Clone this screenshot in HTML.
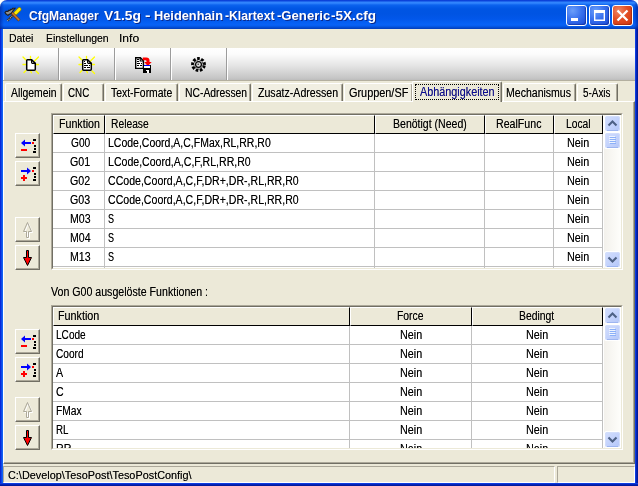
<!DOCTYPE html>
<html><head><meta charset="utf-8"><title>CfgManager</title>
<style>
*{box-sizing:border-box;margin:0;padding:0}
html,body{width:638px;height:486px;overflow:hidden;background:#fff}
body{font-family:"Liberation Sans",sans-serif;font-size:12px;color:#000;position:relative}
#win{position:absolute;left:0;top:0;width:638px;height:486px;background:#ece9d8;border-radius:7px 7px 0 0;overflow:hidden;will-change:transform}
#title{position:absolute;left:0;top:0;width:638px;height:29px;
 background:linear-gradient(to right,rgba(0,10,120,.45) 0,rgba(0,10,120,.2) 2px,rgba(0,10,120,0) 4px,rgba(0,10,120,0) 634px,rgba(0,10,120,.25) 636px,rgba(0,10,120,.5) 638px),linear-gradient(to bottom,#0a3cd4 0,#0d48de 1px,#2e80fa 2px,#3388ff 3px,#1f74f6 4px,#0c63ee 5px,#045be8 7px,#0055e3 9px,#0054e3 14px,#0257ea 19px,#0560f4 23px,#0862f6 25px,#055cec 26px,#0452dc 27px,#0346c8 28px,#033eb8 29px)}
#bl{position:absolute;left:0;top:29px;width:3px;height:457px;background:linear-gradient(to right,#0828d8 0,#0828d8 1px,#0d48e8 1px,#0d48e8 2px,#1162f2 2px)}
#br{position:absolute;left:635px;top:29px;width:3px;height:457px;background:linear-gradient(to right,#0b3de0 0,#0b3de0 1px,#0523b8 1px,#0523b8 2px,#001a9c 2px)}
#bb{position:absolute;left:0;top:483px;width:638px;height:3px;background:linear-gradient(to bottom,#0b3de0 0,#0b3de0 1px,#0523b8 1px,#0523b8 2px,#001a9c 2px)}
#hl{position:absolute;left:3px;top:29px;width:1px;height:72px;background:#fbf3da}
#tbl{position:absolute;left:3px;top:80px;width:632px;height:1px;background:#b3af9f}
.t{position:absolute;white-space:pre;transform-origin:0 0;text-shadow:0 0 0 rgba(0,0,0,.55)}
.f12{font:12px/14px "Liberation Sans",sans-serif}
.f11{font:11px/13px "Liberation Sans",sans-serif}
.ft{font:bold 13px/16px "Liberation Sans",sans-serif;color:#fff;text-shadow:1px 1px 0 #0a2a8c}
#tb{position:absolute;left:3px;top:48px;width:632px;height:32px;border-left:1px solid #fff;background:linear-gradient(to bottom,#fff 0,#fcfcfc 6px,#e6e6e6 17px,#c6c6c6 30px,#bdbdbd 32px)}
.tsep{position:absolute;top:0;width:2px;height:32px;border-left:1px solid #9c9c9c;border-right:1px solid #fff}
.tab{position:absolute;top:83px;height:18px;background:#f1efe2;border-left:1px solid #fff;border-top:1px solid #fff;border-right:1px solid #716f64;border-radius:2px 2px 0 0;box-shadow:inset -1px 0 0 #aca899}
.tabsel{position:absolute;top:81px;height:21px;background:#ece9d8;border-left:1px solid #fff;border-top:1px solid #fff;border-right:1px solid #716f64;border-radius:2px 2px 0 0;box-shadow:inset -1px 0 0 #aca899}
.tabsel .focus{position:absolute;left:2px;top:2px;right:2px;height:16px;border:1px dotted #000}
#page{position:absolute;left:3px;top:101px;width:632px;height:363px;border-top:1px solid #fff;border-left:1px solid #fff;border-right:1px solid #716f64;border-bottom:1px solid #716f64;box-shadow:inset -1px -1px 0 #aca899}
.grid{position:absolute;border:1px solid #aca899;border-right-color:#fff;border-bottom-color:#fff;background:#fff;overflow:hidden}
.grid .in{position:absolute;left:0;top:0;right:0;bottom:0;border:1px solid #716f64;border-right-color:#ece9d8;border-bottom-color:#ece9d8;overflow:hidden}
.hc{position:absolute;top:0;height:19px;background:#ece9d8;border-left:1px solid #fff;border-top:1px solid #fff;border-right:1px solid #000;border-bottom:1px solid #000}
.c{position:absolute;height:19px;border-right:1px solid #c0c0c0;border-bottom:1px solid #c0c0c0;background:#fff}
.btn{position:absolute;left:15px;width:25px;height:25px;background:#ece9d8;border:1px solid;border-color:#fff #716f64 #716f64 #fff;box-shadow:inset -1px -1px 0 #aca899}
.btn svg{position:absolute;left:-1px;top:-1px}
.sb{position:absolute;width:17px;background:linear-gradient(to right,#f3f1ec,#fefefb)}
.sbtn{position:absolute;left:0}

#status{position:absolute;left:3px;top:464px;width:632px;height:19px;background:#ece9d8}
.sp{position:absolute;top:2px;height:17px;border:1px solid;border-color:#aca899 #fff #fff #aca899}
.cbtn{position:absolute;top:5px;width:21px;height:21px;border:1px solid #fff;border-radius:3px;background:radial-gradient(circle at 30% 25%,#6a9efa 0,#3a72ee 45%,#2458de 80%,#1c48c8 100%);box-shadow:inset -1px -1px 1px rgba(0,20,120,.45)}
.cbtn.close{background:radial-gradient(circle at 30% 25%,#f08866 0,#e24e24 45%,#d43c14 85%,#b82e0e 100%);box-shadow:inset -1px -1px 1px rgba(110,20,0,.45)}
.cbtn svg{position:absolute;left:-1px;top:-1px}
.ticon{position:absolute;top:0;margin-left:-1px}

</style></head><body>
<div id="win">
<svg width="0" height="0" style="position:absolute"><defs><linearGradient id="sbg" x1="0" y1="0" x2="1" y2="1"><stop offset="0" stop-color="#d3defd"/><stop offset="0.5" stop-color="#c4d3fc"/><stop offset="1" stop-color="#b3c6f8"/></linearGradient></defs></svg>
<div id="title"></div>
<svg style="position:absolute;left:0;top:0" width="30" height="29" viewBox="0 0 30 29">
<line x1="13.6" y1="14.6" x2="7.4" y2="20.8" stroke="#2e2e2e" stroke-width="2.3"/>
<line x1="13.6" y1="14.6" x2="7.4" y2="20.8" stroke="#b8b8b8" stroke-width="1.1" stroke-dasharray="1 1"/>
<line x1="15.4" y1="13.2" x2="19.4" y2="9.2" stroke="#8f8000" stroke-width="4.2" stroke-linecap="round"/>
<line x1="15.4" y1="13.2" x2="19.4" y2="9.2" stroke="#ffee00" stroke-width="2.7" stroke-linecap="round"/>
<line x1="10.5" y1="11.5" x2="19.4" y2="20.6" stroke="#6b3a10" stroke-width="2.9"/>
<line x1="10.8" y1="11.5" x2="19.2" y2="20.1" stroke="#c8782f" stroke-width="1.6"/>
<path d="M5 12.6 L6 11.4 L8 11.4 L8.6 10.4 L10 10.4 L10.6 9.4 L12 9.4 L12.6 8.2 L15 8.2 L13.4 10.2 L12.2 12 L11 13.6 L9 14.4 L8 15.4 L7 14.6 L6 14 Z" fill="#8e8e8e" stroke="#1e1e1e" stroke-width="1.1"/>
</svg>
<div class="cbtn" style="left:566px"><svg width="21" height="21" viewBox="0 0 21 21"><rect x="5" y="13" width="7" height="3" fill="#fff"/></svg></div>
<div class="cbtn" style="left:589px"><svg width="21" height="21" viewBox="0 0 21 21"><path d="M5 5 H16 V16 H5 Z M6.4 8 V14.6 H14.6 V8 Z" fill="#fff" fill-rule="evenodd"/></svg></div>
<div class="cbtn close" style="left:612px"><svg width="21" height="21" viewBox="0 0 21 21"><path d="M5.5 5.5 L15.5 15.5 M15.5 5.5 L5.5 15.5" stroke="#fff" stroke-width="2.3" fill="none"/></svg></div>

<span class="t ft tt" style="left:28.80px;top:8px;transform:scaleX(0.9286)">CfgManager</span>
<span class="t ft tt" style="left:104.00px;top:8px;transform:scaleX(1.0621)">V1.5g</span>
<span class="t ft tt" style="left:144.60px;top:8px;transform:scaleX(1.2750)">-</span>
<span class="t ft tt" style="left:153.80px;top:8px;transform:scaleX(0.9840)">Heidenhain</span>
<span class="t ft tt" style="left:225.30px;top:8px;transform:scaleX(0.9381)">-Klartext</span>
<span class="t ft tt" style="left:277.20px;top:8px;transform:scaleX(1.0093)">-Generic</span>
<span class="t ft tt" style="left:331.40px;top:8px;transform:scaleX(1.0391)">-5X.cfg</span>
<div id="bl"></div><div id="br"></div><div id="bb"></div><div id="hl"></div><div id="tbl"></div>
<span class="t f11 " style="left:9.00px;top:32px;transform:scaleX(0.9510)">Datei</span>
<span class="t f11 " style="left:45.50px;top:32px;transform:scaleX(0.9480)">Einstellungen</span>
<span class="t f11 " style="left:119.40px;top:32px;transform:scaleX(1.1027)">Info</span>
<div id="tb">
<div class="tsep" style="left:54px"></div>
<div class="tsep" style="left:110px"></div>
<div class="tsep" style="left:166px"></div>
<div class="tsep" style="left:222px"></div>
<svg class="ticon" style="left:14px" width="28" height="32" viewBox="17 48 28 32"><g stroke="#ff0" stroke-width="1.3" stroke-linecap="round"><path d="M23 57 L26 60 M30.5 56.5 V59 M38.5 57 L34 61.5 M23 64.5 H26 M36 64.5 H38.5 M24 72.5 L26 70.5 M30.5 71 L31.5 72.8 M36 71 L38.5 73.5"/></g><path d="M27.5 59.7 H31.6 L35.3 63.4 V69.3 Q35.3 70.3 34.3 70.3 H27.7 Q26.7 70.3 26.7 69.3 V60.5 Q26.7 59.7 27.5 59.7 Z" fill="#fff" stroke="#000" stroke-width="1.5"/><path d="M31.6 59.7 V62.6 Q31.6 63.4 32.4 63.4 H35.3" fill="none" stroke="#000" stroke-width="1.2"/></svg>
<svg class="ticon" style="left:70px" width="28" height="32" viewBox="17 48 28 32"><g stroke="#ff0" stroke-width="1.3" stroke-linecap="round"><path d="M23 57 L26 60 M30.5 56.5 V59 M38.5 57 L34 61.5 M23 64.5 H26 M36 64.5 H38.5 M24 72.5 L26 70.5 M30.5 71 L31.5 72.8 M36 71 L38.5 73.5"/></g><path d="M27.5 59.7 H31.6 L35.3 63.4 V69.3 Q35.3 70.3 34.3 70.3 H27.7 Q26.7 70.3 26.7 69.3 V60.5 Q26.7 59.7 27.5 59.7 Z" fill="#fff" stroke="#000" stroke-width="1.5"/><path d="M31.6 59.7 V62.6 Q31.6 63.4 32.4 63.4 H35.3" fill="none" stroke="#000" stroke-width="1.2"/><g shape-rendering="crispEdges"><rect x="28" y="61" width="1" height="1"/><rect x="28" y="63" width="2" height="1"/><rect x="28" y="65" width="4" height="1"/><rect x="33" y="65" width="1" height="1"/><rect x="28" y="67" width="2" height="1"/><rect x="31" y="67" width="3" height="1"/></g></svg>
<svg class="ticon" style="left:126px" width="28" height="32" viewBox="129 48 28 32"><path d="M135.7 57.7 H140.4 L143.4 60.8 V68.4 H135.7 Z" fill="#fff" stroke="#000" stroke-width="1.4"/><path d="M140.2 57.7 V61 H143.4" fill="none" stroke="#000" stroke-width="1.1"/><g shape-rendering="crispEdges"><rect x="137" y="59" width="2" height="1"/><rect x="137" y="61" width="2" height="1"/><rect x="137" y="63" width="3" height="1"/><rect x="141" y="63" width="1" height="1"/><rect x="137" y="65" width="2" height="1"/><rect x="140" y="65" width="2" height="1"/></g><path d="M142.8 57.6 H146.3 Q149.5 57.6 149.5 60.6 V62 H151.7 L147.9 65.9 L144.1 62 H146.5 V61.2 Q146.5 60.3 145.6 60.3 H142.8 Z" fill="#f00"/><g shape-rendering="crispEdges"><rect x="143" y="65" width="8" height="8" fill="#000"/><rect x="144" y="66" width="6" height="2" fill="#fff"/><rect x="144" y="65" width="6" height="1" fill="#00f"/><rect x="146" y="70" width="3" height="3" fill="#fff"/><rect x="146" y="71" width="1" height="2" fill="#000"/></g></svg>
<svg class="ticon" style="left:182px" width="28" height="32" viewBox="185 48 28 32"><circle cx="198.5" cy="64.5" r="5.9" fill="none" stroke="#000" stroke-width="3" stroke-dasharray="2.6 1.52" transform="rotate(10 198.5 64.5)"/><circle cx="198.5" cy="64.5" r="4.6" fill="none" stroke="#111" stroke-width="0.9" stroke-dasharray="1.6 1.6"/><circle cx="198.5" cy="64.5" r="2.9" fill="#dcdcdc" stroke="#000" stroke-width="1.2"/><circle cx="198.2" cy="64.2" r="0.75" fill="#222"/></svg>

</div>
<div class="tab" style="left:5px;width:57px"></div>
<span class="t f12 " style="left:11.00px;top:86px;transform:scaleX(0.8651)">Allgemein</span>
<div class="tab" style="left:63px;width:41px"></div>
<span class="t f12 " style="left:68.00px;top:86px;transform:scaleX(0.8165)">CNC</span>
<div class="tab" style="left:105px;width:73px"></div>
<span class="t f12 " style="left:110.50px;top:86px;transform:scaleX(0.8661)">Text-Formate</span>
<div class="tab" style="left:179px;width:72px"></div>
<span class="t f12 " style="left:184.50px;top:86px;transform:scaleX(0.8620)">NC-Adressen</span>
<div class="tab" style="left:252px;width:91px"></div>
<span class="t f12 " style="left:257.50px;top:86px;transform:scaleX(0.8830)">Zusatz-Adressen</span>
<div class="tab" style="left:344px;width:69px"></div>
<span class="t f12 " style="left:349.00px;top:86px;transform:scaleX(0.9072)">Gruppen/SF</span>
<div class="tab" style="left:503px;width:73px"></div>
<span class="t f12 " style="left:506.00px;top:86px;transform:scaleX(0.8781)">Mechanismus</span>
<div class="tab" style="left:577px;width:41px"></div>
<span class="t f12 " style="left:583.00px;top:86px;transform:scaleX(0.8248)">5-Axis</span>
<div id="page"></div>
<div class="tabsel" style="left:412px;width:90px"><div class="focus"></div></div>
<span class="t f12 " style="left:420.00px;top:85px;transform:scaleX(0.9018);color:#0a0a96">Abhängigkeiten</span>
<div class="btn" style="top:133px"><svg width="25" height="25" viewBox="0 0 25 25" shape-rendering="crispEdges"><rect x="7" y="9" width="9" height="2" fill="#00f"/><path d="M6 10 L10 6.5 L10 13.5 Z" fill="#00f" shape-rendering="auto"/><rect x="17" y="9" width="2" height="2" fill="#f00"/><rect x="18" y="6" width="3" height="2"/><rect x="19" y="12" width="2" height="2"/><rect x="19" y="15" width="2" height="2"/><rect x="18" y="18" width="3" height="2"/><rect x="6" y="16" width="6" height="2" fill="#f00"/></svg>
</div>
<div class="btn" style="top:161px"><svg width="25" height="25" viewBox="0 0 25 25" shape-rendering="crispEdges"><rect x="6" y="9" width="9" height="2" fill="#00f"/><path d="M16 10 L12 6.5 L12 13.5 Z" fill="#00f" shape-rendering="auto"/><rect x="17" y="9" width="2" height="2" fill="#f00"/><rect x="18" y="6" width="3" height="2"/><rect x="19" y="12" width="2" height="2"/><rect x="19" y="15" width="2" height="2"/><rect x="18" y="18" width="3" height="2"/><rect x="6" y="16" width="6" height="2" fill="#f00"/><rect x="8" y="14" width="2" height="6" fill="#f00"/></svg>
</div>
<div class="btn" style="top:217px"><svg width="25" height="25" viewBox="0 0 25 25"><path d="M13.5 6.5 L9.5 15.5 H12.5 V21.5 H14.5 V15.5 H17.5 Z" fill="none" stroke="#fff" stroke-width="1"/><path d="M12.5 5.5 L8.5 14.5 H11.5 V20.5 H13.5 V14.5 H16.5 Z" fill="none" stroke="#aca899" stroke-width="1"/></svg>
</div>
<div class="btn" style="top:245px"><svg width="25" height="25" viewBox="0 0 25 25"><path d="M11.5 5.5 H13.5 V12.5 H16.5 L12.5 20.5 L8.5 12.5 H11.5 Z" fill="#f00" stroke="#000" stroke-width="1"/></svg>
</div>
<div class="btn" style="top:329px"><svg width="25" height="25" viewBox="0 0 25 25" shape-rendering="crispEdges"><rect x="7" y="9" width="9" height="2" fill="#00f"/><path d="M6 10 L10 6.5 L10 13.5 Z" fill="#00f" shape-rendering="auto"/><rect x="17" y="9" width="2" height="2" fill="#f00"/><rect x="18" y="6" width="3" height="2"/><rect x="19" y="12" width="2" height="2"/><rect x="19" y="15" width="2" height="2"/><rect x="18" y="18" width="3" height="2"/><rect x="6" y="16" width="6" height="2" fill="#f00"/></svg>
</div>
<div class="btn" style="top:357px"><svg width="25" height="25" viewBox="0 0 25 25" shape-rendering="crispEdges"><rect x="6" y="9" width="9" height="2" fill="#00f"/><path d="M16 10 L12 6.5 L12 13.5 Z" fill="#00f" shape-rendering="auto"/><rect x="17" y="9" width="2" height="2" fill="#f00"/><rect x="18" y="6" width="3" height="2"/><rect x="19" y="12" width="2" height="2"/><rect x="19" y="15" width="2" height="2"/><rect x="18" y="18" width="3" height="2"/><rect x="6" y="16" width="6" height="2" fill="#f00"/><rect x="8" y="14" width="2" height="6" fill="#f00"/></svg>
</div>
<div class="btn" style="top:397px"><svg width="25" height="25" viewBox="0 0 25 25"><path d="M13.5 6.5 L9.5 15.5 H12.5 V21.5 H14.5 V15.5 H17.5 Z" fill="none" stroke="#fff" stroke-width="1"/><path d="M12.5 5.5 L8.5 14.5 H11.5 V20.5 H13.5 V14.5 H16.5 Z" fill="none" stroke="#aca899" stroke-width="1"/></svg>
</div>
<div class="btn" style="top:425px"><svg width="25" height="25" viewBox="0 0 25 25"><path d="M11.5 5.5 H13.5 V12.5 H16.5 L12.5 20.5 L8.5 12.5 H11.5 Z" fill="#f00" stroke="#000" stroke-width="1"/></svg>
</div>
<div class="grid" style="left:51px;top:113px;width:572px;height:157px"><div class="in">
<div class="hc" style="left:0px;width:52px"></div>
<span class="t f12 " style="left:5.75px;top:2px;transform:scaleX(0.8875)">Funktion</span>
<div class="hc" style="left:52px;width:270px"></div>
<span class="t f12 " style="left:57.50px;top:2px;transform:scaleX(0.8568)">Release</span>
<div class="hc" style="left:322px;width:110px"></div>
<span class="t f12 " style="left:339.62px;top:2px;transform:scaleX(0.8774)">Benötigt (Need)</span>
<div class="hc" style="left:432px;width:69px"></div>
<span class="t f12 " style="left:443.25px;top:2px;transform:scaleX(0.8859)">RealFunc</span>
<div class="hc" style="left:501px;width:49px"></div>
<span class="t f12 " style="left:513.00px;top:2px;transform:scaleX(0.8565)">Local</span>
<div class="c" style="left:0px;top:19px;width:52px"></div>
<span class="t f12 " style="left:17.50px;top:21px;transform:scaleX(0.8475)">G00</span>
<div class="c" style="left:52px;top:19px;width:270px"></div>
<span class="t f12 " style="left:55.00px;top:21px;transform:scaleX(0.8745)">LCode,Coord,A,C,FMax,RL,RR,R0</span>
<div class="c" style="left:322px;top:19px;width:110px"></div>
<div class="c" style="left:432px;top:19px;width:69px"></div>
<div class="c" style="left:501px;top:19px;width:49px"></div>
<span class="t f12 " style="left:514.25px;top:21px;transform:scaleX(0.8956)">Nein</span>
<div class="c" style="left:0px;top:38px;width:52px"></div>
<span class="t f12 " style="left:17.05px;top:40px;transform:scaleX(0.8870)">G01</span>
<div class="c" style="left:52px;top:38px;width:270px"></div>
<span class="t f12 " style="left:55.00px;top:40px;transform:scaleX(0.8806)">LCode,Coord,A,C,F,RL,RR,R0</span>
<div class="c" style="left:322px;top:38px;width:110px"></div>
<div class="c" style="left:432px;top:38px;width:69px"></div>
<div class="c" style="left:501px;top:38px;width:49px"></div>
<span class="t f12 " style="left:514.25px;top:40px;transform:scaleX(0.8956)">Nein</span>
<div class="c" style="left:0px;top:57px;width:52px"></div>
<span class="t f12 " style="left:17.05px;top:59px;transform:scaleX(0.8870)">G02</span>
<div class="c" style="left:52px;top:57px;width:270px"></div>
<span class="t f12 " style="left:55.00px;top:59px;transform:scaleX(0.8813)">CCode,Coord,A,C,F,DR+,DR-,RL,RR,R0</span>
<div class="c" style="left:322px;top:57px;width:110px"></div>
<div class="c" style="left:432px;top:57px;width:69px"></div>
<div class="c" style="left:501px;top:57px;width:49px"></div>
<span class="t f12 " style="left:514.25px;top:59px;transform:scaleX(0.8956)">Nein</span>
<div class="c" style="left:0px;top:76px;width:52px"></div>
<span class="t f12 " style="left:17.05px;top:78px;transform:scaleX(0.8870)">G03</span>
<div class="c" style="left:52px;top:76px;width:270px"></div>
<span class="t f12 " style="left:55.00px;top:78px;transform:scaleX(0.8813)">CCode,Coord,A,C,F,DR+,DR-,RL,RR,R0</span>
<div class="c" style="left:322px;top:76px;width:110px"></div>
<div class="c" style="left:432px;top:76px;width:69px"></div>
<div class="c" style="left:501px;top:76px;width:49px"></div>
<span class="t f12 " style="left:514.25px;top:78px;transform:scaleX(0.8956)">Nein</span>
<div class="c" style="left:0px;top:95px;width:52px"></div>
<span class="t f12 " style="left:16.75px;top:97px;transform:scaleX(0.8870)">M03</span>
<div class="c" style="left:52px;top:95px;width:270px"></div>
<span class="t f12 " style="left:55.00px;top:97px;transform:scaleX(0.7500)">S</span>
<div class="c" style="left:322px;top:95px;width:110px"></div>
<div class="c" style="left:432px;top:95px;width:69px"></div>
<div class="c" style="left:501px;top:95px;width:49px"></div>
<span class="t f12 " style="left:514.25px;top:97px;transform:scaleX(0.8956)">Nein</span>
<div class="c" style="left:0px;top:114px;width:52px"></div>
<span class="t f12 " style="left:16.75px;top:116px;transform:scaleX(0.8870)">M04</span>
<div class="c" style="left:52px;top:114px;width:270px"></div>
<span class="t f12 " style="left:55.00px;top:116px;transform:scaleX(0.7500)">S</span>
<div class="c" style="left:322px;top:114px;width:110px"></div>
<div class="c" style="left:432px;top:114px;width:69px"></div>
<div class="c" style="left:501px;top:114px;width:49px"></div>
<span class="t f12 " style="left:514.25px;top:116px;transform:scaleX(0.8956)">Nein</span>
<div class="c" style="left:0px;top:133px;width:52px"></div>
<span class="t f12 " style="left:16.75px;top:135px;transform:scaleX(0.8870)">M13</span>
<div class="c" style="left:52px;top:133px;width:270px"></div>
<span class="t f12 " style="left:55.00px;top:135px;transform:scaleX(0.7500)">S</span>
<div class="c" style="left:322px;top:133px;width:110px"></div>
<div class="c" style="left:432px;top:133px;width:69px"></div>
<div class="c" style="left:501px;top:133px;width:49px"></div>
<span class="t f12 " style="left:514.25px;top:135px;transform:scaleX(0.8956)">Nein</span>
<div class="c" style="left:0px;top:152px;width:52px"></div>
<span class="t f12 " style="left:16.75px;top:154px;transform:scaleX(0.8870)">M14</span>
<div class="c" style="left:52px;top:152px;width:270px"></div>
<span class="t f12 " style="left:55.00px;top:154px;transform:scaleX(0.7500)">S</span>
<div class="c" style="left:322px;top:152px;width:110px"></div>
<div class="c" style="left:432px;top:152px;width:69px"></div>
<div class="c" style="left:501px;top:152px;width:49px"></div>
<span class="t f12 " style="left:514.25px;top:154px;transform:scaleX(0.8956)">Nein</span>
<div class="sb" style="left:551px;top:0;height:153px">
<svg class="sbtn" style="top:0px" width="17" height="17" viewBox="0 0 17 17"><rect width="17" height="17" rx="2.5" fill="#fff"/><rect x="1" y="1" width="15" height="15" rx="2" fill="url(#sbg)"/><rect x="1.5" y="1.5" width="14" height="14" rx="1.8" fill="none" stroke="#d3defb" stroke-width="1"/><path d="M3 15.5 H14" stroke="#9db5f0" stroke-width="1"/><path d="M4.5 10.5 L8.5 6.5 L12.5 10.5" fill="none" stroke="#4d6185" stroke-width="2.1"/></svg>
<svg class="sbtn" style="top:17px" width="17" height="17" viewBox="0 0 17 17"><rect width="17" height="17" rx="2.5" fill="#fff"/><rect x="1" y="1" width="15" height="15" rx="2" fill="url(#sbg)"/><rect x="1.5" y="1.5" width="14" height="14" rx="1.8" fill="none" stroke="#d3defb" stroke-width="1"/><path d="M3 15.5 H14" stroke="#9db5f0" stroke-width="1"/><g shape-rendering="crispEdges"><path d="M5 4h6v1h-6zM5 6h6v1h-6zM5 8h6v1h-6zM5 10h6v1h-6z" fill="#eef4fe"/><path d="M6 5h6v1h-6zM6 7h6v1h-6zM6 9h6v1h-6zM6 11h6v1h-6z" fill="#8cb0f8"/></g></svg>
<svg class="sbtn" style="top:136px" width="17" height="17" viewBox="0 0 17 17"><rect width="17" height="17" rx="2.5" fill="#fff"/><rect x="1" y="1" width="15" height="15" rx="2" fill="url(#sbg)"/><rect x="1.5" y="1.5" width="14" height="14" rx="1.8" fill="none" stroke="#d3defb" stroke-width="1"/><path d="M3 15.5 H14" stroke="#9db5f0" stroke-width="1"/><path d="M4.5 6.5 L8.5 10.5 L12.5 6.5" fill="none" stroke="#4d6185" stroke-width="2.1"/></svg>
</div>
</div></div>
<span class="t f12 " style="left:51.25px;top:285px;transform:scaleX(0.8850)">Von G00 ausgelöste Funktionen :</span>
<div class="grid" style="left:51px;top:305px;width:572px;height:145px"><div class="in">
<div class="hc" style="left:0px;width:297px"></div>
<span class="t f12 " style="left:5.00px;top:2px;transform:scaleX(0.8985)">Funktion</span>
<div class="hc" style="left:297px;width:122px"></div>
<span class="t f12 " style="left:344.12px;top:2px;transform:scaleX(0.8629)">Force</span>
<div class="hc" style="left:419px;width:131px"></div>
<span class="t f12 " style="left:466.12px;top:2px;transform:scaleX(0.8643)">Bedingt</span>
<div class="c" style="left:0px;top:19px;width:297px"></div>
<span class="t f12 " style="left:2.50px;top:21px;transform:scaleX(0.8406)">LCode</span>
<div class="c" style="left:297px;top:19px;width:122px"></div>
<span class="t f12 " style="left:346.75px;top:21px;transform:scaleX(0.8956)">Nein</span>
<div class="c" style="left:419px;top:19px;width:131px"></div>
<span class="t f12 " style="left:473.25px;top:21px;transform:scaleX(0.8956)">Nein</span>
<div class="c" style="left:0px;top:38px;width:297px"></div>
<span class="t f12 " style="left:2.50px;top:40px;transform:scaleX(0.8435)">Coord</span>
<div class="c" style="left:297px;top:38px;width:122px"></div>
<span class="t f12 " style="left:346.75px;top:40px;transform:scaleX(0.8956)">Nein</span>
<div class="c" style="left:419px;top:38px;width:131px"></div>
<span class="t f12 " style="left:473.25px;top:40px;transform:scaleX(0.8956)">Nein</span>
<div class="c" style="left:0px;top:57px;width:297px"></div>
<span class="t f12 " style="left:2.50px;top:59px;transform:scaleX(0.8870)">A</span>
<div class="c" style="left:297px;top:57px;width:122px"></div>
<span class="t f12 " style="left:346.75px;top:59px;transform:scaleX(0.8956)">Nein</span>
<div class="c" style="left:419px;top:57px;width:131px"></div>
<span class="t f12 " style="left:473.25px;top:59px;transform:scaleX(0.8956)">Nein</span>
<div class="c" style="left:0px;top:76px;width:297px"></div>
<span class="t f12 " style="left:2.50px;top:78px;transform:scaleX(0.8870)">C</span>
<div class="c" style="left:297px;top:76px;width:122px"></div>
<span class="t f12 " style="left:346.75px;top:78px;transform:scaleX(0.8956)">Nein</span>
<div class="c" style="left:419px;top:76px;width:131px"></div>
<span class="t f12 " style="left:473.25px;top:78px;transform:scaleX(0.8956)">Nein</span>
<div class="c" style="left:0px;top:95px;width:297px"></div>
<span class="t f12 " style="left:2.50px;top:97px;transform:scaleX(0.8583)">FMax</span>
<div class="c" style="left:297px;top:95px;width:122px"></div>
<span class="t f12 " style="left:346.75px;top:97px;transform:scaleX(0.8956)">Nein</span>
<div class="c" style="left:419px;top:95px;width:131px"></div>
<span class="t f12 " style="left:473.25px;top:97px;transform:scaleX(0.8956)">Nein</span>
<div class="c" style="left:0px;top:114px;width:297px"></div>
<span class="t f12 " style="left:2.50px;top:116px;transform:scaleX(0.8139)">RL</span>
<div class="c" style="left:297px;top:114px;width:122px"></div>
<span class="t f12 " style="left:346.75px;top:116px;transform:scaleX(0.8956)">Nein</span>
<div class="c" style="left:419px;top:114px;width:131px"></div>
<span class="t f12 " style="left:473.25px;top:116px;transform:scaleX(0.8956)">Nein</span>
<div class="c" style="left:0px;top:133px;width:297px"></div>
<span class="t f12 " style="left:2.50px;top:135px;transform:scaleX(0.8870)">RR</span>
<div class="c" style="left:297px;top:133px;width:122px"></div>
<span class="t f12 " style="left:346.75px;top:135px;transform:scaleX(0.8956)">Nein</span>
<div class="c" style="left:419px;top:133px;width:131px"></div>
<span class="t f12 " style="left:473.25px;top:135px;transform:scaleX(0.8956)">Nein</span>
<div class="sb" style="left:551px;top:0;height:141px">
<svg class="sbtn" style="top:0px" width="17" height="17" viewBox="0 0 17 17"><rect width="17" height="17" rx="2.5" fill="#fff"/><rect x="1" y="1" width="15" height="15" rx="2" fill="url(#sbg)"/><rect x="1.5" y="1.5" width="14" height="14" rx="1.8" fill="none" stroke="#d3defb" stroke-width="1"/><path d="M3 15.5 H14" stroke="#9db5f0" stroke-width="1"/><path d="M4.5 10.5 L8.5 6.5 L12.5 10.5" fill="none" stroke="#4d6185" stroke-width="2.1"/></svg>
<svg class="sbtn" style="top:17px" width="17" height="17" viewBox="0 0 17 17"><rect width="17" height="17" rx="2.5" fill="#fff"/><rect x="1" y="1" width="15" height="15" rx="2" fill="url(#sbg)"/><rect x="1.5" y="1.5" width="14" height="14" rx="1.8" fill="none" stroke="#d3defb" stroke-width="1"/><path d="M3 15.5 H14" stroke="#9db5f0" stroke-width="1"/><g shape-rendering="crispEdges"><path d="M5 4h6v1h-6zM5 6h6v1h-6zM5 8h6v1h-6zM5 10h6v1h-6z" fill="#eef4fe"/><path d="M6 5h6v1h-6zM6 7h6v1h-6zM6 9h6v1h-6zM6 11h6v1h-6z" fill="#8cb0f8"/></g></svg>
<svg class="sbtn" style="top:124px" width="17" height="17" viewBox="0 0 17 17"><rect width="17" height="17" rx="2.5" fill="#fff"/><rect x="1" y="1" width="15" height="15" rx="2" fill="url(#sbg)"/><rect x="1.5" y="1.5" width="14" height="14" rx="1.8" fill="none" stroke="#d3defb" stroke-width="1"/><path d="M3 15.5 H14" stroke="#9db5f0" stroke-width="1"/><path d="M4.5 6.5 L8.5 10.5 L12.5 6.5" fill="none" stroke="#4d6185" stroke-width="2.1"/></svg>
</div>
</div></div>
<div id="status"><div class="sp" style="left:0;width:552px"></div><div class="sp" style="left:554px;width:78px"></div>
<span class="t f11 " style="left:4.50px;top:5px;transform:scaleX(0.9876)">C:\Develop\TesoPost\TesoPostConfig\</span>
</div>
</div>
</body></html>
